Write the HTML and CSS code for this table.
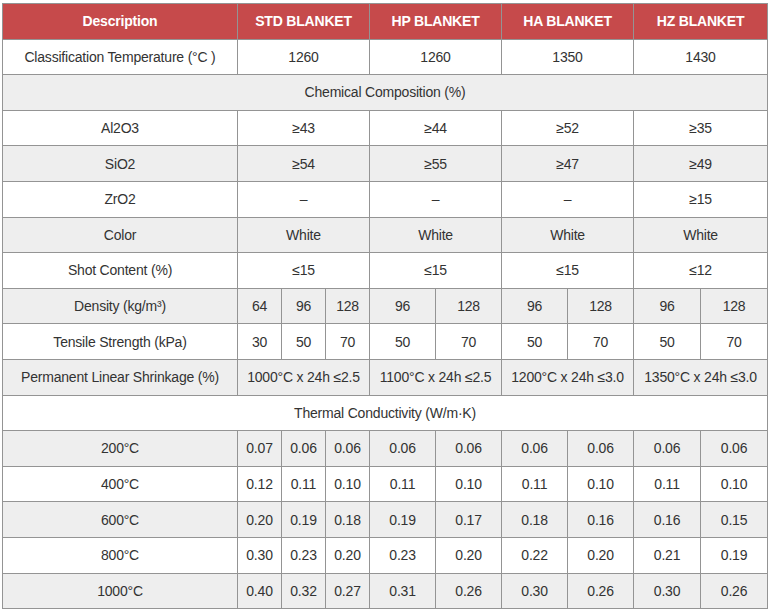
FILE: index.html
```html
<!DOCTYPE html>
<html>
<head>
<meta charset="utf-8">
<link rel="stylesheet" href="styles.css">
</head>
<body>
<div class="wrap">
<table class="spec">
<colgroup>
<col class="c-desc">
<col class="c-s"><col class="c-s"><col class="c-s">
<col class="c-m"><col class="c-m">
<col class="c-m"><col class="c-m">
<col class="c-l"><col class="c-l">
</colgroup>
<thead>
<tr><th>Description</th><th colspan="3">STD BLANKET</th><th colspan="2">HP BLANKET</th><th colspan="2">HA BLANKET</th><th colspan="2">HZ BLANKET</th></tr>
</thead>
<tbody>
<tr><td>Classification Temperature (°C )</td><td colspan="3">1260</td><td colspan="2">1260</td><td colspan="2">1350</td><td colspan="2">1430</td></tr>
<tr><td colspan="10">Chemical Composition (%)</td></tr>
<tr><td>Al2O3</td><td colspan="3">≥43</td><td colspan="2">≥44</td><td colspan="2">≥52</td><td colspan="2">≥35</td></tr>
<tr><td>SiO2</td><td colspan="3">≥54</td><td colspan="2">≥55</td><td colspan="2">≥47</td><td colspan="2">≥49</td></tr>
<tr><td>ZrO2</td><td colspan="3">–</td><td colspan="2">–</td><td colspan="2">–</td><td colspan="2">≥15</td></tr>
<tr><td>Color</td><td colspan="3">White</td><td colspan="2">White</td><td colspan="2">White</td><td colspan="2">White</td></tr>
<tr><td>Shot Content (%)</td><td colspan="3">≤15</td><td colspan="2">≤15</td><td colspan="2">≤15</td><td colspan="2">≤12</td></tr>
<tr><td>Density (kg/m³)</td><td>64</td><td>96</td><td>128</td><td>96</td><td>128</td><td>96</td><td>128</td><td>96</td><td>128</td></tr>
<tr><td>Tensile Strength (kPa)</td><td>30</td><td>50</td><td>70</td><td>50</td><td>70</td><td>50</td><td>70</td><td>50</td><td>70</td></tr>
<tr><td>Permanent Linear Shrinkage (%)</td><td colspan="3">1000°C x 24h ≤2.5</td><td colspan="2">1100°C x 24h ≤2.5</td><td colspan="2">1200°C x 24h ≤3.0</td><td colspan="2">1350°C x 24h ≤3.0</td></tr>
<tr><td colspan="10">Thermal Conductivity (W/m·K)</td></tr>
<tr><td>200°C</td><td>0.07</td><td>0.06</td><td>0.06</td><td>0.06</td><td>0.06</td><td>0.06</td><td>0.06</td><td>0.06</td><td>0.06</td></tr>
<tr><td>400°C</td><td>0.12</td><td>0.11</td><td>0.10</td><td>0.11</td><td>0.10</td><td>0.11</td><td>0.10</td><td>0.11</td><td>0.10</td></tr>
<tr><td>600°C</td><td>0.20</td><td>0.19</td><td>0.18</td><td>0.19</td><td>0.17</td><td>0.18</td><td>0.16</td><td>0.16</td><td>0.15</td></tr>
<tr><td>800°C</td><td>0.30</td><td>0.23</td><td>0.20</td><td>0.23</td><td>0.20</td><td>0.22</td><td>0.20</td><td>0.21</td><td>0.19</td></tr>
<tr><td>1000°C</td><td>0.40</td><td>0.32</td><td>0.27</td><td>0.31</td><td>0.26</td><td>0.30</td><td>0.26</td><td>0.30</td><td>0.26</td></tr>
</tbody>
</table>
</div>
</body>
</html>
```

FILE: styles.css
```css
html, body {
  margin: 0;
  padding: 0;
  background: #ffffff;
}
.wrap {
  padding: 3px 0 0 2px;
}
.spec {
  border-collapse: collapse;
  table-layout: fixed;
  width: 766px;
  font-family: "Liberation Sans", Arial, sans-serif;
  font-size: 14px;
  letter-spacing: -0.2px;
  color: #333333;
}
.c-desc { width: 235px; }
.c-s { width: 44px; }
.c-m { width: 66px; }
.c-l { width: 67px; }
.spec th,
.spec td {
  border: 1px solid #949494;
  text-align: center;
  vertical-align: middle;
  height: 35.6px;
  padding: 0;
  box-sizing: border-box;
  white-space: nowrap;
}
.spec th {
  background: #c64a4b;
  color: #ffffff;
  font-weight: bold;
}
.spec tbody tr:nth-child(even) td {
  background: #eeeeee;
}
```
